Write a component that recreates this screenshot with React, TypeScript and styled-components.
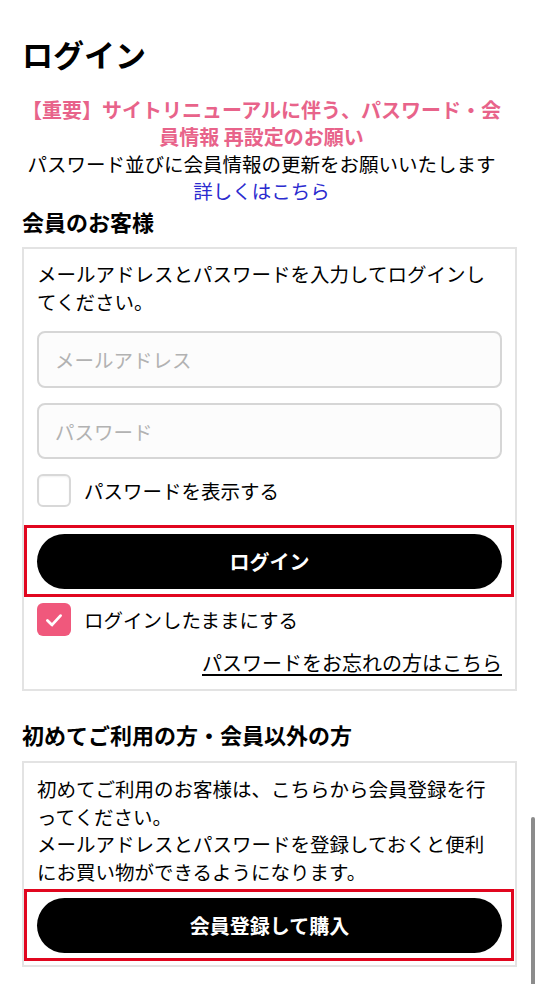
import React from "react";
import styled, { createGlobalStyle } from "styled-components";

const GlobalStyle = createGlobalStyle`
  html, body {
    margin: 0;
    padding: 0;
    background: #ffffff;
  }
  body {
    font-family: "Noto Sans CJK JP", "Noto Sans", sans-serif;
    color: #000000;
    -webkit-font-smoothing: antialiased;
  }
  * { box-sizing: border-box; }
`;

const Page = styled.main`
  padding: 35px 23px 0 22px;
`;

const Title = styled.h1`
  margin: 0;
  font-size: 31px;
  line-height: 38px;
  font-weight: 700;
`;

const Notice = styled.section`
  margin-top: 23px;
  padding-right: 16px;
  text-align: center;
  line-height: 27px;
`;

const NoticeTitle = styled.p`
  margin: 0;
  color: #e8638a;
  font-size: 20px;
  font-weight: 700;
`;

const NoticeText = styled.p`
  margin: 0;
  font-size: 19.5px;
`;

const NoticeLink = styled.a`
  display: block;
  color: #2b2bcf;
  font-size: 19.5px;
  text-decoration: none;
`;

const SectionHeading = styled.h2<{ $top: number; $bottom: number }>`
  margin: ${(p) => p.$top}px 0 ${(p) => p.$bottom}px;
  font-size: 22px;
  line-height: 28px;
  font-weight: 700;
`;

const Panel = styled.div<{ $pt: number; $pb: number }>`
  border: 2px solid #e3e3e3;
  padding: ${(p) => p.$pt}px 13px ${(p) => p.$pb}px;
`;

const PanelText = styled.p`
  margin: 0;
  font-size: 19.5px;
  line-height: 27.5px;
`;

const Field = styled.input<{ $top: number; $h: number }>`
  display: block;
  width: 100%;
  height: ${(p) => p.$h}px;
  margin-top: ${(p) => p.$top}px;
  padding: 0 16px;
  border: 2px solid #d6d6d6;
  border-radius: 8px;
  background: #fcfcfc;
  font-family: inherit;
  font-size: 19.5px;
  color: #000;
  outline: none;
  &::placeholder {
    color: #b2b2b2;
  }
`;

const CheckRow = styled.label<{ $top: number }>`
  display: flex;
  align-items: center;
  gap: 13px;
  margin-top: ${(p) => p.$top}px;
  font-size: 19.5px;
  line-height: 33px;
`;

const CheckBox = styled.span<{ $checked?: boolean }>`
  flex: none;
  width: 34px;
  height: 33px;
  border-radius: 6px;
  display: flex;
  align-items: center;
  justify-content: center;
  background: ${(p) => (p.$checked ? "#f0587c" : "#ffffff")};
  border: ${(p) => (p.$checked ? "none" : "2px solid #d8d8d8")};
  box-shadow: ${(p) => (p.$checked ? "none" : "inset 0 1px 2px rgba(0,0,0,0.06)")};
`;

const Highlight = styled.div<{ $top: number }>`
  margin: ${(p) => p.$top}px -12px 0 -13px;
  padding: 6.5px 9px 5px 10px;
  border: 3px solid #e1061f;
`;

const PillButton = styled.button`
  display: block;
  width: 100%;
  height: 55px;
  border: none;
  border-radius: 28px;
  background: #000000;
  color: #ffffff;
  font-family: inherit;
  font-size: 20px;
  font-weight: 700;
  cursor: pointer;
`;

const ForgotRow = styled.div`
  margin-top: 12.5px;
  text-align: right;
  font-size: 20px;
  line-height: 27px;
`;

const ForgotLink = styled.a`
  color: #000000;
  text-decoration: underline;
  text-underline-offset: 3px;
`;

const ScrollIndicator = styled.div`
  position: fixed;
  right: 5px;
  top: 817px;
  bottom: -10px;
  width: 4px;
  border-radius: 2px;
  background: #8c8c8c;
`;

const CheckMark = () => (
  <svg width="24" height="24" viewBox="0 0 22 22" fill="none">
    <path
      d="M5 11.5 L9.2 15.5 L17 7"
      stroke="#ffffff"
      strokeWidth="2.6"
      strokeLinecap="round"
      strokeLinejoin="round"
    />
  </svg>
);

export default function App() {
  return (
    <>
      <GlobalStyle />
      <Page>
        <Title>ログイン</Title>

        <Notice>
          <NoticeTitle>
            【重要】サイトリニューアルに伴う、パスワード・会
            <br />
            員情報 再設定のお願い
          </NoticeTitle>
          <NoticeText>パスワード並びに会員情報の更新をお願いいたします</NoticeText>
          <NoticeLink href="#">詳しくはこちら</NoticeLink>
        </Notice>

        <SectionHeading $top={3} $bottom={12}>
          会員のお客様
        </SectionHeading>
        <Panel $pt={11} $pb={13.5}>
          <PanelText>
            メールアドレスとパスワードを入力してログインし
            <br />
            てください。
          </PanelText>
          <Field $top={16} $h={57} type="email" placeholder="メールアドレス" />
          <Field $top={15} $h={56} type="password" placeholder="パスワード" />
          <CheckRow $top={15}>
            <CheckBox />
            パスワードを表示する
          </CheckRow>
          <Highlight $top={17.5}>
            <PillButton>ログイン</PillButton>
          </Highlight>
          <CheckRow $top={6}>
            <CheckBox $checked>
              <CheckMark />
            </CheckBox>
            ログインしたままにする
          </CheckRow>
          <ForgotRow>
            <ForgotLink href="#">パスワードをお忘れの方はこちら</ForgotLink>
          </ForgotRow>
        </Panel>

        <SectionHeading $top={29} $bottom={13}>
          初めてご利用の方・会員以外の方
        </SectionHeading>
        <Panel $pt={12} $pb={4}>
          <PanelText>
            初めてご利用のお客様は、こちらから会員登録を行
            <br />
            ってください。
            <br />
            メールアドレスとパスワードを登録しておくと便利
            <br />
            にお買い物ができるようになります。
          </PanelText>
          <Highlight $top={3.5}>
            <PillButton>会員登録して購入</PillButton>
          </Highlight>
        </Panel>
      </Page>
      <ScrollIndicator />
    </>
  );
}
